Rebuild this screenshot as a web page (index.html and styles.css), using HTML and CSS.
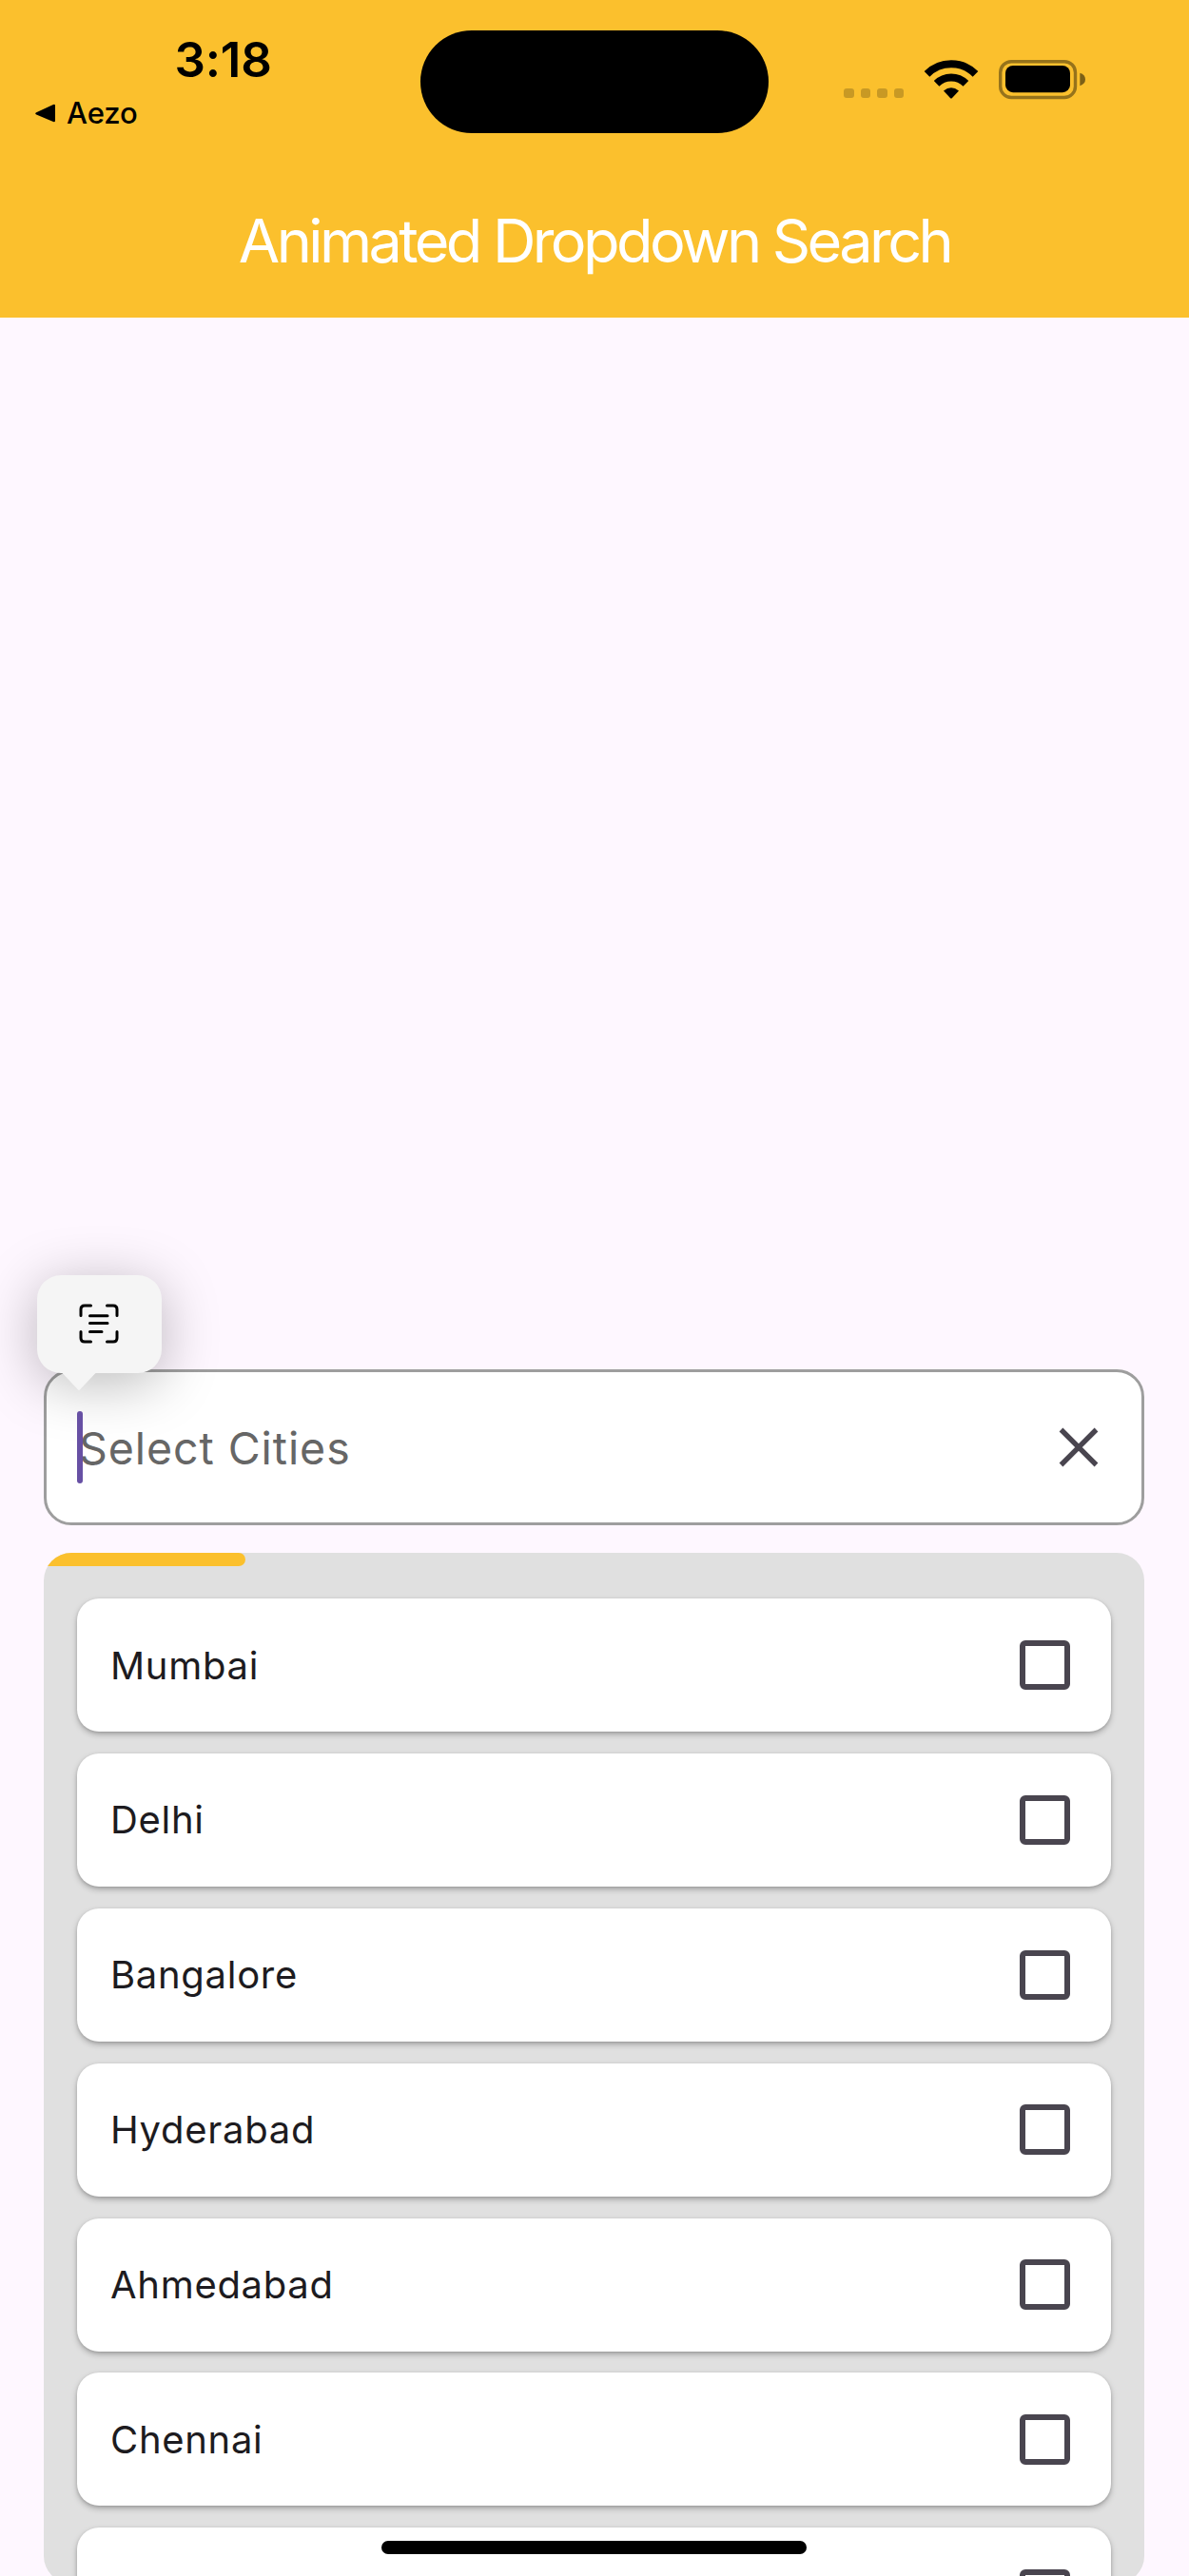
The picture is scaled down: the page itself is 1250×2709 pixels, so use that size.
FILE: index.html
```html
<!DOCTYPE html>
<html lang="en">
<head>
<meta charset="utf-8">
<title>Animated Dropdown Search</title>
<link rel="stylesheet" href="styles.css">
</head>
<body>
<header class="app-bar">
  <div class="status">
    <div class="status-left">
      <div class="time">3:18</div>
      <div class="back">
        <svg width="24" height="22" viewBox="0 0 24 22"><path d="M2.2 10.2 20 2.1q2-.8 2 1.2v15.4q0 2-2 1.4L2.2 12.6q-2-1.2 0-2.4z"/></svg>
        <span>Aezo</span>
      </div>
    </div>
    <div class="island"></div>
    <div class="status-right">
      <div class="signal"><i></i><i></i><i></i><i></i></div>
      <svg class="wifi" width="58" height="42" viewBox="0 0 58 42">
        <g fill="none" stroke="#000" stroke-width="8">
          <path d="M3.5 14.9A36 36 0 0 1 54.5 14.9"/>
          <path d="M13.6 24.8A21.8 21.8 0 0 1 44.4 24.8"/>
        </g>
        <path d="M21 32.5q8-6.6 16 0L29.8 40.2q-.8.7-1.6 0z"/>
      </svg>
      <svg class="battery" width="92" height="42" viewBox="0 0 92 42">
        <rect x="1.7" y="1.7" width="78.8" height="37.8" rx="11.5" fill="none" stroke="#000" stroke-opacity=".4" stroke-width="3.4"/>
        <rect x="7" y="6" width="68" height="28.2" rx="8"/>
        <path d="M85.3 13.8q5.7 1.8 5.7 6.7t-5.7 6.7z" fill-opacity=".5"/>
      </svg>
    </div>
  </div>
  <h1 class="title">Animated Dropdown Search</h1>
</header>
<main class="content">
  <div class="field">
    <span class="cursor"></span>
    <span class="placeholder">Select Cities</span>
    <svg class="clear" width="42" height="42" viewBox="0 0 42 42"><path d="M2.5 2.5 39.5 39.5M39.5 2.5 2.5 39.5" stroke="#49454f" stroke-width="5.4"/></svg>
    <div class="callout">
      <svg width="42" height="42" viewBox="0 0 42 42" fill="none" stroke="#000" stroke-width="3" stroke-linecap="round" stroke-linejoin="round">
        <path d="M2 12.5V6q0-4 4-4h6.500M29.500 2H36q4 0 4 4v6.500M40 29.500V36q0 4-4 4h-6.500M12.500 40H6q-4 0-4-4v-6.500M11.500 12.700h18.500M11.500 20.500h18.500M11.500 29.500h12.500"/>
      </svg>
      <svg class="tail" width="44" height="21" viewBox="0 0 44 21"><path d="M0 0h44q-3 .5-5 2.500L22 20.500 5 2.500Q3 .5 0 0z" fill="#f5f5f5"/></svg>
    </div>
  </div>
  <section class="panel">
    <div class="progress"></div>
    <ul class="list">
      <li class="card"><span>Mumbai</span><b class="box"></b></li>
      <li class="card"><span>Delhi</span><b class="box"></b></li>
      <li class="card"><span>Bangalore</span><b class="box"></b></li>
      <li class="card"><span>Hyderabad</span><b class="box"></b></li>
      <li class="card"><span>Ahmedabad</span><b class="box"></b></li>
      <li class="card"><span>Chennai</span><b class="box"></b></li>
      <li class="card"><span></span><b class="box"></b></li>
    </ul>
  </section>
</main>
<div class="home"></div>
</body>
</html>
```
FILE: styles.css
```css
* { box-sizing: border-box; }
body {
  margin: 0;
  position: relative;
  height: 2709px;
  overflow: hidden;
  background: #fef7ff;
  font-family: Inter, "Liberation Sans", sans-serif;
}
svg { display: block; flex: none; }
.app-bar { height: 334px; background: #fbc02d; }
.status {
  display: grid;
  grid-template-columns: 441.5px 366px 1fr;
  height: 213px;
}
.status-left { padding-top: 32.5px; }
.time {
  padding-left: 183.500px;
  font-size: 51px;
  font-weight: 600;
  line-height: 60px;
  letter-spacing: -0.2px;
}
.back {
  display: flex;
  align-items: center;
  gap: 10px;
  margin-top: 6.500px;
  padding-left: 36px;
  font-size: 31px;
  font-weight: 500;
  line-height: 40px;
  letter-spacing: -0.1px;
}
.island {
  margin-top: 32px;
  height: 107.500px;
  border-radius: 54px;
  background: #000;
}
.status-right {
  display: flex;
  align-items: flex-start;
  padding: 63px 0 0 79.500px;
}
.signal { display: flex; gap: 7px; margin-top: 30px; }
.signal i {
  width: 10.500px;
  height: 10px;
  border-radius: 3px;
  background: rgba(0, 0, 0, 0.2);
}
.wifi { margin-left: 21px; }
.battery { margin-left: 21px; }
.title {
  margin: 0;
  color: #fff;
  font-size: 63px;
  font-weight: 380;
  line-height: 80px;
  letter-spacing: -3.600px;
  text-align: center;
}
.content { padding: 1106px 47px 0 46px; }
.field {
  position: relative;
  display: flex;
  align-items: center;
  height: 163.500px;
  padding: 0 45px 0 32px;
  border: 3px solid #9e9e9e;
  border-radius: 29px;
  background: #fff;
}
.cursor {
  width: 6px;
  height: 76px;
  border-radius: 3px;
  background: #6750a4;
  position: relative;
  z-index: 1;
}
.placeholder {
  flex: 1;
  margin-left: -4px;
  padding-top: 2px;
  color: #666;
  font-size: 46.500px;
  line-height: 60px;
  letter-spacing: 0.93px;
}
.callout {
  position: absolute;
  left: -10.500px;
  top: -102px;
  display: flex;
  justify-content: center;
  align-items: center;
  width: 131px;
  height: 102.500px;
  border-radius: 25px;
  background: #f5f5f5;
  box-shadow: 0 10px 60px rgba(0, 0, 0, 0.28);
}
.tail { position: absolute; left: 22px; top: 101px; }
.panel {
  margin-top: 29px;
  height: 1084px;
  border-radius: 29px;
  background: #e0e0e0;
  overflow: hidden;
}
.progress {
  width: 212px;
  height: 14px;
  border-radius: 0 7px 7px 0;
  background: #fbc02d;
}
.list {
  display: flex;
  flex-direction: column;
  gap: 22.900px;
  margin: 0;
  padding: 34.500px 35px 0;
  list-style: none;
}
.card {
  display: flex;
  flex: none;
  justify-content: space-between;
  align-items: center;
  height: 140px;
  padding: 0 43.500px 0 35px;
  border-radius: 23px;
  background: #fff;
  box-shadow: 0 3px 6px rgba(0, 0, 0, 0.26), 0 1px 3px rgba(0, 0, 0, 0.12);
  color: #1d1b20;
  font-size: 40px;
  font-weight: 370;
  line-height: 60px;
  letter-spacing: 0.700px;
}
.card span { padding-top: 1px; }
.box {
  width: 52.500px;
  height: 52.500px;
  border: 6px solid #49454f;
  border-radius: 6px;
}
.home {
  position: absolute;
  left: 401px;
  top: 2672px;
  width: 447px;
  height: 14px;
  border-radius: 7px;
  background: #000;
}
```
